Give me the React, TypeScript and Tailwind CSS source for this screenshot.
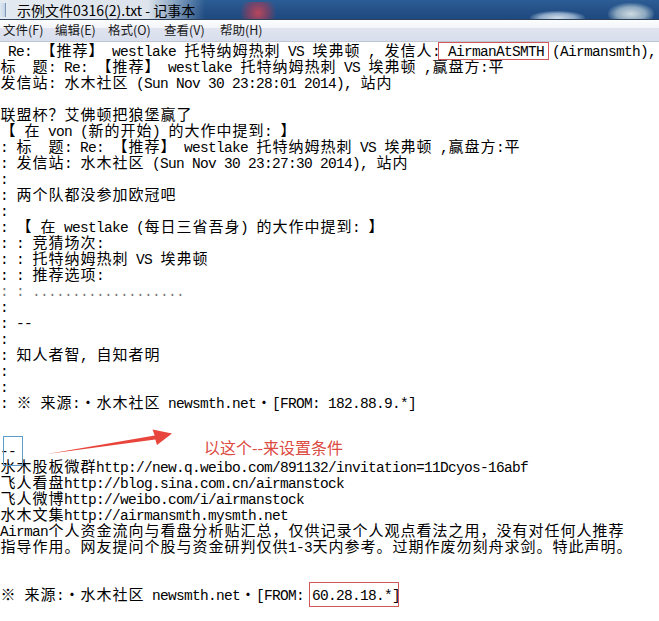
import React from 'react';

const LINES: string[] = [
  ' Re: 【推荐】 westlake 托特纳姆热刺 VS 埃弗顿 , 发信人: AirmanAtSMTH (Airmansmth),',
  '标  题: Re: 【推荐】 westlake 托特纳姆热刺 VS 埃弗顿 ,赢盘方:平',
  '发信站: 水木社区 (Sun Nov 30 23:28:01 2014), 站内',
  '',
  '联盟杯？艾佛顿把狼堡赢了',
  '【 在 von (新的开始) 的大作中提到: 】',
  ': 标  题: Re: 【推荐】 westlake 托特纳姆热刺 VS 埃弗顿 ,赢盘方:平',
  ': 发信站: 水木社区 (Sun Nov 30 23:27:30 2014), 站内',
  ':',
  ': 两个队都没参加欧冠吧',
  ':',
  ': 【 在 westlake (每日三省吾身) 的大作中提到: 】',
  ': : 竞猜场次:',
  ': : 托特纳姆热刺 VS 埃弗顿',
  ': : 推荐选项:',
  ': : ...................',
  ':',
  ': --',
  ':',
  ': 知人者智, 自知者明',
  ':',
  ':',
  ': ※ 来源:·水木社区 newsmth.net·[FROM: 182.88.9.*]',
  '',
  '',
  '--',
  '水木股板微群http://new.q.weibo.com/891132/invitation=11Dcyos-16abf',
  '飞人看盘http://blog.sina.com.cn/airmanstock',
  '飞人微博http://weibo.com/i/airmanstock',
  '水木文集http://airmansmth.mysmth.net',
  'Airman个人资金流向与看盘分析贴汇总，仅供记录个人观点看法之用，没有对任何人推荐',
  '指导作用。网友提问个股与资金研判仅供1-3天内参考。过期作废勿刻舟求剑。特此声明。',
  '',
  '',
  '※ 来源:·水木社区 newsmth.net·[FROM: 60.28.18.*]',
];

const MENU = [
  { label: '文件(F)', w: 'w-[52px]' },
  { label: '编辑(E)', w: 'w-[53px]' },
  { label: '格式(O)', w: 'w-[56px]' },
  { label: '查看(V)', w: 'w-[56px]' },
  { label: '帮助(H)', w: 'w-[56px]' },
];

// ascii runs are 8px per char, everything else gets a 16px cell (like NSimSun)
function Line({ text, gray }: { text: string; gray?: boolean }) {
  const parts: React.ReactNode[] = [];
  let buf = '';
  const flush = (k: number) => {
    if (!buf) return;
    parts.push(
      <span key={'a' + k} className="font-['Liberation_Mono',monospace] text-[14.5px] tracking-[-0.7px]">
        {buf}
      </span>
    );
    buf = '';
  };
  Array.from(text).forEach((ch, i) => {
    if (ch.charCodeAt(0) < 128) {
      buf += ch;
    } else {
      flush(i);
      parts.push(
        <span key={i} className="inline-block w-4 text-center font-['Noto_Sans_CJK_SC',sans-serif] text-[15px] leading-4">
          {ch}
        </span>
      );
    }
  });
  flush(text.length);
  return (
    <div className={`h-4 leading-4 whitespace-pre ${gray ? 'text-[#7a7a7a]' : 'text-black'}`}>{parts}</div>
  );
}

export default function App() {
  return (
    <div className="w-[659px] h-[621px] overflow-hidden bg-white flex flex-col">
      {/* title bar */}
      <div className="relative h-[19px] shrink-0 overflow-hidden bg-[linear-gradient(180deg,#2c5d94_0%,#234f86_60%,#1d4a80_100%)]">
        <div className="absolute left-0 top-0 h-[19px] w-[205px] bg-[linear-gradient(90deg,#e4eaf1_0%,#dde4ec_72%,rgba(210,222,235,0)_100%)]" />
        <div className="absolute left-[236px] top-[2px] h-[22px] w-[44px] rounded-full bg-[radial-gradient(circle,#b8465c_0%,rgba(150,60,90,0.6)_45%,rgba(35,80,134,0)_75%)]" />
        <div className="absolute left-[530px] top-[11px] h-[14px] w-[55px] rounded-full bg-[radial-gradient(ellipse,#d2deea_0%,rgba(190,210,230,0.7)_45%,rgba(35,80,134,0)_75%)]" />
        <div className="absolute left-[608px] top-[3px] h-[22px] w-[46px] rounded-full bg-[radial-gradient(ellipse,#cfdce2_0%,rgba(185,205,215,0.7)_45%,rgba(35,80,134,0)_75%)]" />
        <div className="relative flex items-center h-full">
          <div className="w-[6px] h-[14px] mt-[1px] bg-[linear-gradient(90deg,#dfe8f2,#c4d3e4)] border-r border-[#7d97b8]" />
          <span className="ml-[11px] font-['Noto_Sans_CJK_SC',sans-serif] text-[14px] leading-none text-black">
            示例文件0316(2).txt - 记事本
          </span>
        </div>
      </div>
      <div className="h-px shrink-0 bg-[#2f4159]" />
      {/* menu bar */}
      <div className="h-[21px] shrink-0 flex items-center pl-[3px] bg-[linear-gradient(180deg,#fcfdfe_0%,#f3f5f9_36%,#e0e4f0_40%,#d9deed_100%)]">
        {MENU.map((m) => (
          <div key={m.label} className={`${m.w} shrink-0 font-['Noto_Sans_CJK_SC',sans-serif] text-[12.5px] leading-none text-[#1b1b1b]`}>
            {m.label}
          </div>
        ))}
      </div>
      <div className="h-px shrink-0 bg-[#c0c6d3]" />
      {/* text area */}
      <div className="relative flex-1 overflow-hidden bg-white">
        {LINES.map((l, i) => (
          <Line key={i} text={l} gray={i === 15} />
        ))}

        {/* annotations */}
        <div className="absolute left-[438px] top-0 w-[111px] h-[18px] border border-[#d0585a]" />
        <div className="absolute left-[3px] top-[394px] w-[20px] h-[30px] border border-[#5e9bc8]" />
        <div className="absolute left-[309px] top-[540px] w-[90px] h-[25px] border border-[#d0585a]" />
        <div className="absolute left-[204px] top-[395px] font-['Noto_Sans_CJK_SC',sans-serif] text-[16px] leading-[20px] text-[#dc4a42]">
          以这个--来设置条件
        </div>
        <svg className="absolute left-0 top-0 pointer-events-none" width="659" height="579" viewBox="0 0 659 579">
          <polygon
            points="47,412 154.7,393.5 152.5,387.5 172,391.5 157,403 155.3,397.5"
            fill="#e8463c"
          />
        </svg>
      </div>
    </div>
  );
}
